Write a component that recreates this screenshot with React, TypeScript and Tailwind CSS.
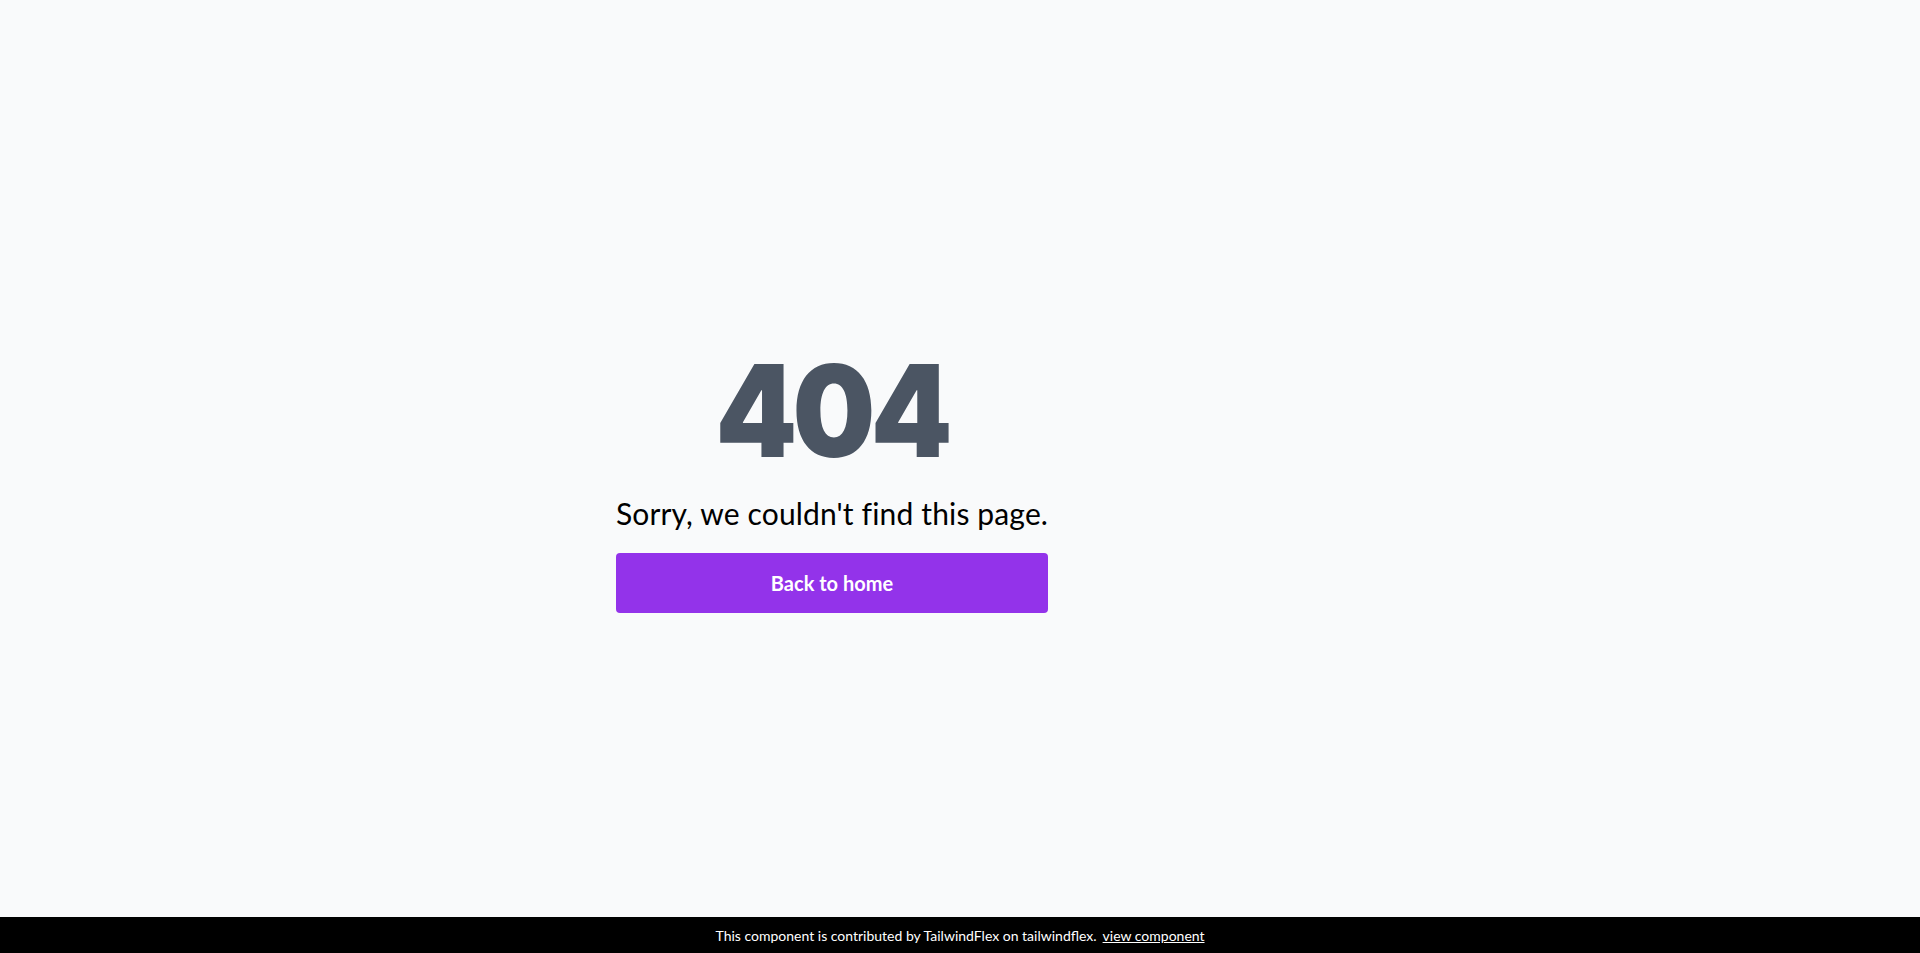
export default function App() {
  return (
    <div className="min-h-[953px] flex flex-col bg-gray-50" style={{ fontFamily: 'Lato, "Noto Sans", sans-serif' }}>
      <main className="flex-1 flex items-center justify-center pt-[42px]">
        <div className="flex flex-row gap-0">
          <div className="w-[432px] flex flex-col items-center">
            <h1 className="text-[128px] leading-none font-black text-[#4b5563] tracking-[-0.04em] scale-x-[0.91]" style={{ fontFamily: 'Inter, sans-serif' }}>404</h1>
            <p className="mt-5 text-[30px] leading-9 text-black whitespace-nowrap tracking-[0.005em]">Sorry, we couldn't find this page.</p>
            <a href="#" className="mt-[22px] w-full h-[60px] flex items-center justify-center rounded bg-[#9333ea] text-white text-xl font-bold">Back to home</a>
          </div>
          <div className="w-[256px]" />
        </div>
      </main>
      <footer className="h-[36px] bg-black flex items-center justify-center text-white text-[14px]">
        <span>This component is contributed by TailwindFlex on tailwindflex.</span>
        <a href="#" className="ml-[6px] underline">view component</a>
      </footer>
    </div>
  );
}
